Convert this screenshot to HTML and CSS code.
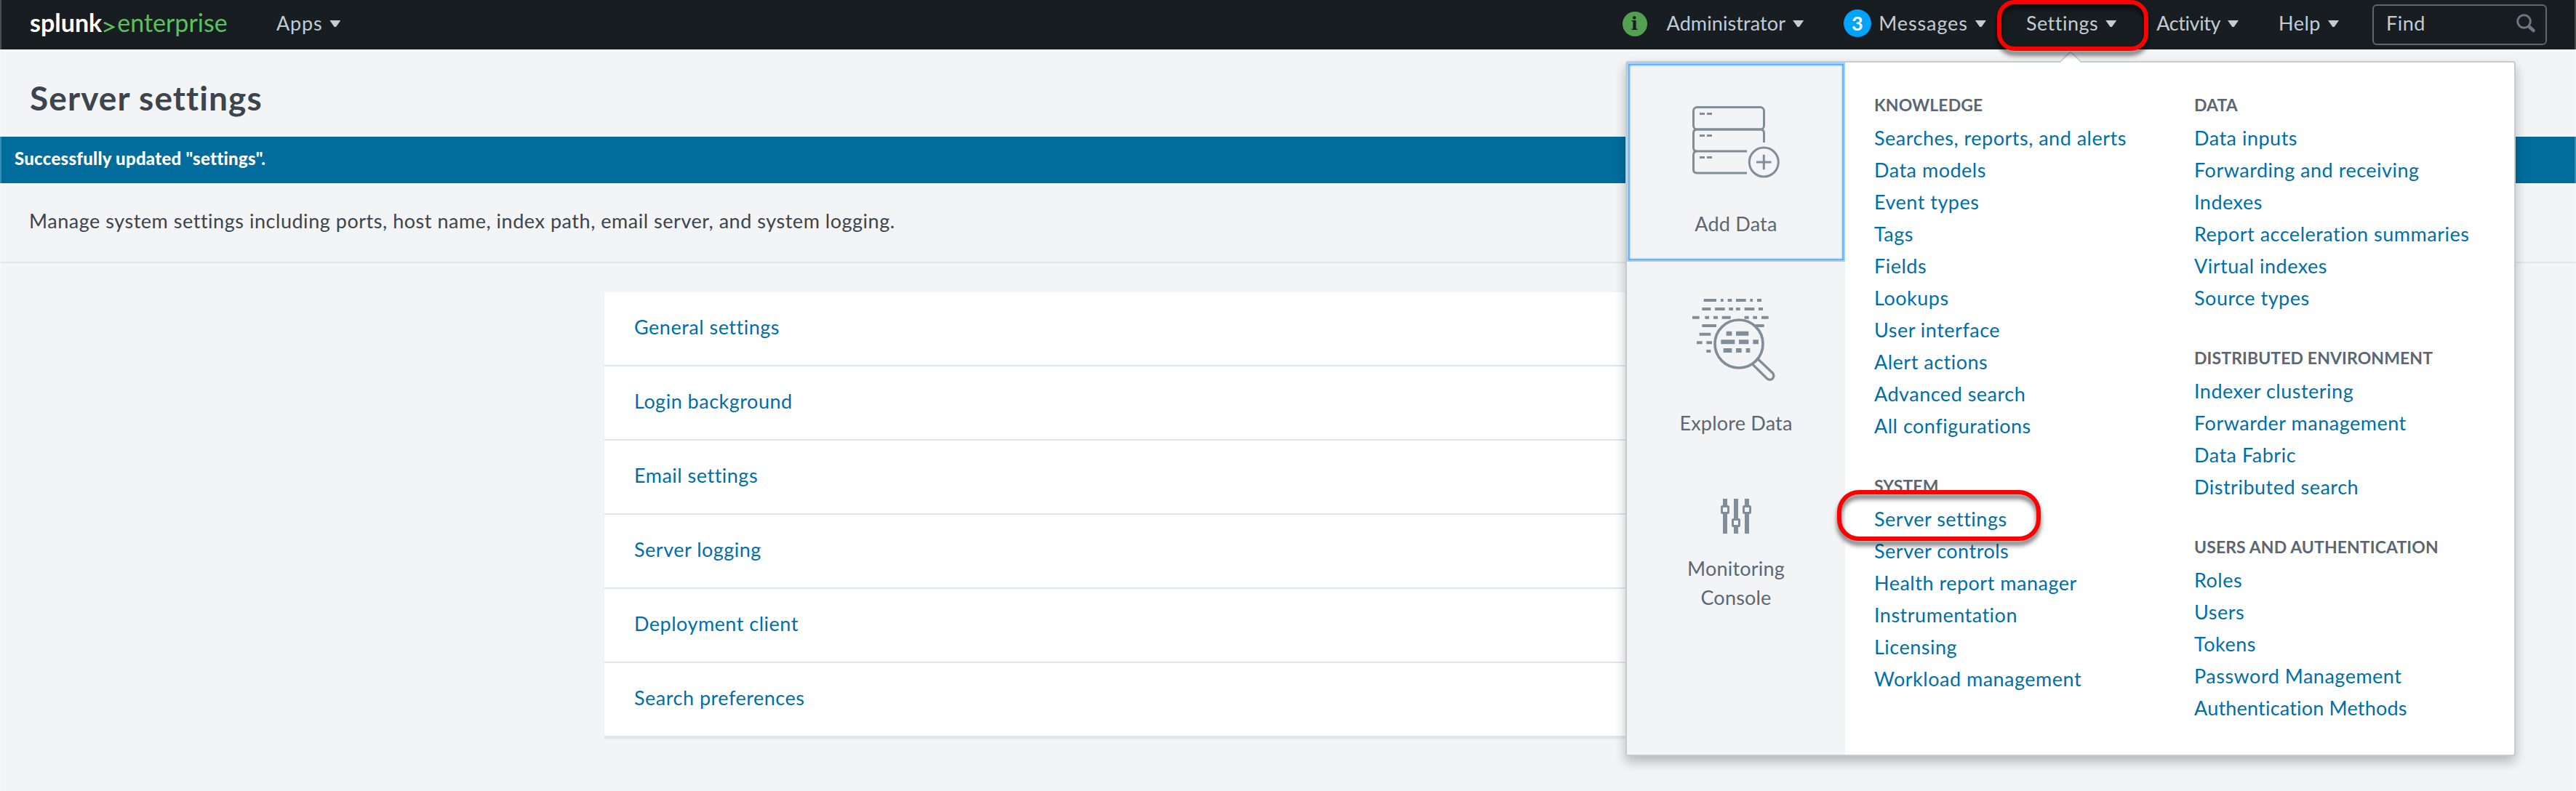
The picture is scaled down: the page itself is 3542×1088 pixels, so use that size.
FILE: index.html
```html
<!DOCTYPE html>
<html lang="en">
<head>
<meta charset="utf-8">
<title>Server settings</title>
<link rel="stylesheet" href="styles.css">
</head>
<body>
<header class="bar">
  <a class="logo"><span class="logo-name">splunk</span><svg class="logo-mark" width="16" height="16" viewBox="0 0 16 16"><path d="M1 2 L14 8.2 L1 14.4" fill="none" stroke="#5cc05c" stroke-width="2.6"/></svg><span class="logo-product">enterprise</span></a>
  <a class="item apps"><span>Apps</span><i class="caret"></i></a>
  <nav class="right">
    <span class="health">i</span>
    <a class="item admin"><span>Administrator</span><i class="caret"></i></a>
    <a class="item messages"><b class="count">3</b><span>Messages</span><i class="caret"></i></a>
    <a class="item settings"><span>Settings</span><i class="caret"></i></a>
    <a class="item activity"><span>Activity</span><i class="caret"></i></a>
    <a class="item help"><span>Help</span><i class="caret"></i></a>
    <div class="find"><span>Find</span><svg width="27" height="27" viewBox="0 0 27 27" fill="none" stroke="#6b7785"><circle cx="10.5" cy="10.5" r="8.8" stroke-width="3"/><path d="M17.5 17.5 L23.5 23" stroke-width="4.6" stroke-linecap="round"/></svg></div>
  </nav>
</header>
<h1 class="title">Server settings</h1>
<div class="message">Successfully updated "settings".</div>
<p class="intro">Manage system settings including ports, host name, index path, email server, and system logging.</p>
<ul class="list">
  <li><a>General settings</a></li>
  <li><a>Login background</a></li>
  <li><a>Email settings</a></li>
  <li><a>Server logging</a></li>
  <li><a>Deployment client</a></li>
  <li><a>Search preferences</a></li>
</ul>
<section class="menu">
  <svg class="arrow" width="30" height="16" viewBox="0 0 30 16"><path d="M0 16 L15 1 L30 16Z" fill="#fff"/><path d="M0 14.5 L15 0.5 L30 14.5" fill="none" stroke="#c3cbd4" stroke-width="1.6"/></svg>
  <aside class="tiles">
    <a class="tile focused">
      <svg width="120" height="100" viewBox="0 0 120 100" fill="none" stroke="#818d99" stroke-width="3"><rect x="1.5" y="1.5" width="97" height="30.5" rx="5"/><path d="M98.500 50 V37 Q98.500 32 93.500 32 H6.500 Q1.500 32 1.500 37 V57 Q1.500 62 6.500 62 H75 M6.500 62 Q1.500 62 1.500 67 V87 Q1.500 92 6.500 92 H75"/><path d="M10 10.500h7m3 0h7M10 40.500h7m3 0h7M10 70.500h7m3 0h7M88 77h20.500M98.300 66.700v20.500"/><circle cx="98.300" cy="77" r="20"/></svg>
      <span>Add Data</span>
    </a>
    <a class="tile explore">
      <svg width="120" height="114" viewBox="321 1025 360 342" fill="none" stroke="#818d99"><path stroke-width="12" d="M368 1031H420M438 1031H449M467 1031H484M501 1031H542M559 1031H570M588 1031H606M361 1067H397M414 1067H455M472 1067H489M501 1067H518M536 1067H577M594 1067H612M321 1102H350M373 1102H390M408 1102H426M443 1102H479M536 1102H554M571 1102H588M606 1102H635M361 1136H420M580 1136H617M350 1171H397M339 1206H362M379 1206H402M379 1241H397"/><path stroke-width="18" d="M461 1168H484M501 1168H553M439 1203H496M513 1203H553M571 1203H594M449 1238H484M501 1238H524M542 1238H559"/><circle cx="513" cy="1211" r="99" stroke-width="11"/><path stroke-width="10" d="M570 1296 L629 1354 Q641 1364 652 1354 Q661 1342 652 1331 L592 1274"/></svg>
      <span>Explore Data</span>
    </a>
    <a class="tile monitor">
      <svg width="42" height="48" viewBox="0 0 42 48"><path fill="#818d99" d="M3 0h6v48h-6zM18 0h6v48h-6zM33 0h6v48h-6z"/><g fill="#f2f4f5" stroke="#818d99" stroke-width="3"><rect x="1.500" y="10.500" width="9" height="9" rx="1"/><rect x="16.500" y="28.500" width="9" height="9" rx="1"/><rect x="31.500" y="10.500" width="9" height="9" rx="1"/></g></svg>
      <span>Monitoring<br>Console</span>
    </a>
  </aside>
  <div class="column">
    <h2>KNOWLEDGE</h2>
    <a>Searches, reports, and alerts</a><a>Data models</a><a>Event types</a><a>Tags</a><a>Fields</a><a>Lookups</a><a>User interface</a><a>Alert actions</a><a>Advanced search</a><a>All configurations</a>
    <h2>SYSTEM</h2>
    <a>Server settings</a><a>Server controls</a><a>Health report manager</a><a>Instrumentation</a><a>Licensing</a><a>Workload management</a>
  </div>
  <div class="column">
    <h2>DATA</h2>
    <a>Data inputs</a><a>Forwarding and receiving</a><a>Indexes</a><a>Report acceleration summaries</a><a>Virtual indexes</a><a>Source types</a>
    <h2>DISTRIBUTED ENVIRONMENT</h2>
    <a>Indexer clustering</a><a>Forwarder management</a><a>Data Fabric</a><a>Distributed search</a>
    <h2>USERS AND AUTHENTICATION</h2>
    <a>Roles</a><a>Users</a><a>Tokens</a><a>Password Management</a><a class="tight">Authentication Methods</a>
  </div>
</section>
<div class="ring ring-nav"></div>
<div class="ring ring-link"></div>
</body>
</html>
```
FILE: styles.css
```css
* { box-sizing: border-box; }
body {
  margin: 0;
  width: 3542px;
  height: 1088px;
  position: relative;
  overflow: hidden;
  background: #f2f4f5;
  color: #3c444d;
  font: 27px/40px Lato, "Open Sans", sans-serif;
  letter-spacing: .5px;
}
body::after {
  content: "";
  position: absolute;
  inset: 0;
  border: solid rgba(255, 255, 255, .22);
  border-width: 0 2px;
}
.bar {
  height: 68px;
  display: flex;
  align-items: center;
  padding: 0 40px 0 41px;
  background: #171d21;
  color: #c3cbd4;
}
.logo { display: flex; align-items: center; width: 339px; padding-bottom: 6px; font-size: 34px; line-height: 62px; letter-spacing: 0; }
.logo-name { color: #fff; font-weight: 700; }
.logo-mark { margin: 11px 3px 0 2px; }
.logo-product { color: #5cc05c; }
.item { display: flex; align-items: center; padding-bottom: 4px; line-height: 64px; }
.apps { letter-spacing: .8px; }
.admin { letter-spacing: .1px; }
.messages { letter-spacing: .9px; }
.activity { letter-spacing: -.4px; }
.caret {
  width: 15px;
  height: 9px;
  margin: 1px 0 0 10px;
  background: #c3cbd4;
  clip-path: polygon(0 0, 100% 0, 58% 100%, 42% 100%);
}
.right { display: flex; align-items: center; margin-left: auto; }
.right .item { margin-right: 55px; }
.right .help { margin-right: 46px; }
.health {
  width: 34px;
  height: 34px;
  margin: -2px 27px 0 0;
  border-radius: 50%;
  background: #53a051;
  color: #171d21;
  font: bold 24px/33px "DejaVu Serif", serif;
  text-align: center;
}
.count {
  width: 38px;
  height: 38px;
  margin: 0 10px 0 0;
  border-radius: 50%;
  background: #00a4fd;
  color: #fff;
  line-height: 38px;
  text-align: center;
}
.find {
  width: 240px;
  height: 56px;
  display: flex;
  justify-content: space-between;
  padding: 0 13px 0 17px;
  border: 2px solid #5c6773;
  border-radius: 6px;
  line-height: 48px;
}
.find svg { margin-top: 11px; }
.title { margin: 0; height: 120px; padding: 37px 41px 0; font-size: 46px; line-height: 60px; font-weight: 700; letter-spacing: 1.1px; }
.message { height: 64px; padding-left: 20px; background: #006d9c; color: #fff; font-size: 24px; line-height: 60px; font-weight: 900; letter-spacing: .25px; }
.intro { margin: 0; height: 110px; padding: 32px 40px 0; border-bottom: 2px solid #e1e6eb; letter-spacing: .53px; }
.list { width: 1880px; margin: 40px auto 0; padding: 0; list-style: none; background: #fff; box-shadow: 0 2px 2px #dfe4e8; }
.list li { height: 102px; padding-left: 41px; border-bottom: 2px solid #e1e6eb; line-height: 96px; }
.list a, .column a { color: #006eaa; }
.menu {
  position: absolute;
  left: 2235px;
  top: 84px;
  width: 1224px;
  height: 956px;
  display: flex;
  background: #fff;
  border: 2px solid #c3cbd4;
  border-radius: 4px;
  box-shadow: 0 8px 16px rgba(0, 0, 0, .25);
}
.arrow { position: absolute; left: 595px; top: -15px; }
.tiles { width: 300px; background: #f2f4f5; color: #5c6773; text-align: center; letter-spacing: .2px; }
.tile { display: flex; flex-direction: column; align-items: center; }
.focused { height: 274px; padding-top: 60px; box-shadow: inset 0 0 0 2px #a9d0f2, inset 0 0 2px 4px #4fadf8; }
.focused span { margin-top: 42px; }
.explore { padding-top: 51px; }
.explore span { margin-top: 37px; }
.monitor { padding-top: 84px; }
.monitor svg { margin-bottom: 28px; }
.column { width: 440px; padding: 31px 0 0 40px; }
.column a { display: block; height: 44px; line-height: 44px; white-space: nowrap; }
.column .tight { letter-spacing: .2px; }
.column h2 { margin: 0 0 7px; height: 44px; color: #5c6773; font-size: 23px; line-height: 54px; font-weight: 700; white-space: nowrap; letter-spacing: .1px; }
.column a + h2 { margin-top: 33px; }
.ring { position: absolute; border: 6px solid #f00; filter: drop-shadow(0 6px 3px rgba(0, 0, 0, .6)); }
.ring-nav { left: 2746px; top: 0; width: 208px; height: 70px; border-radius: 24px; }
.ring-link { left: 2526px; top: 674px; width: 280px; height: 70px; border-radius: 30px; }
```
